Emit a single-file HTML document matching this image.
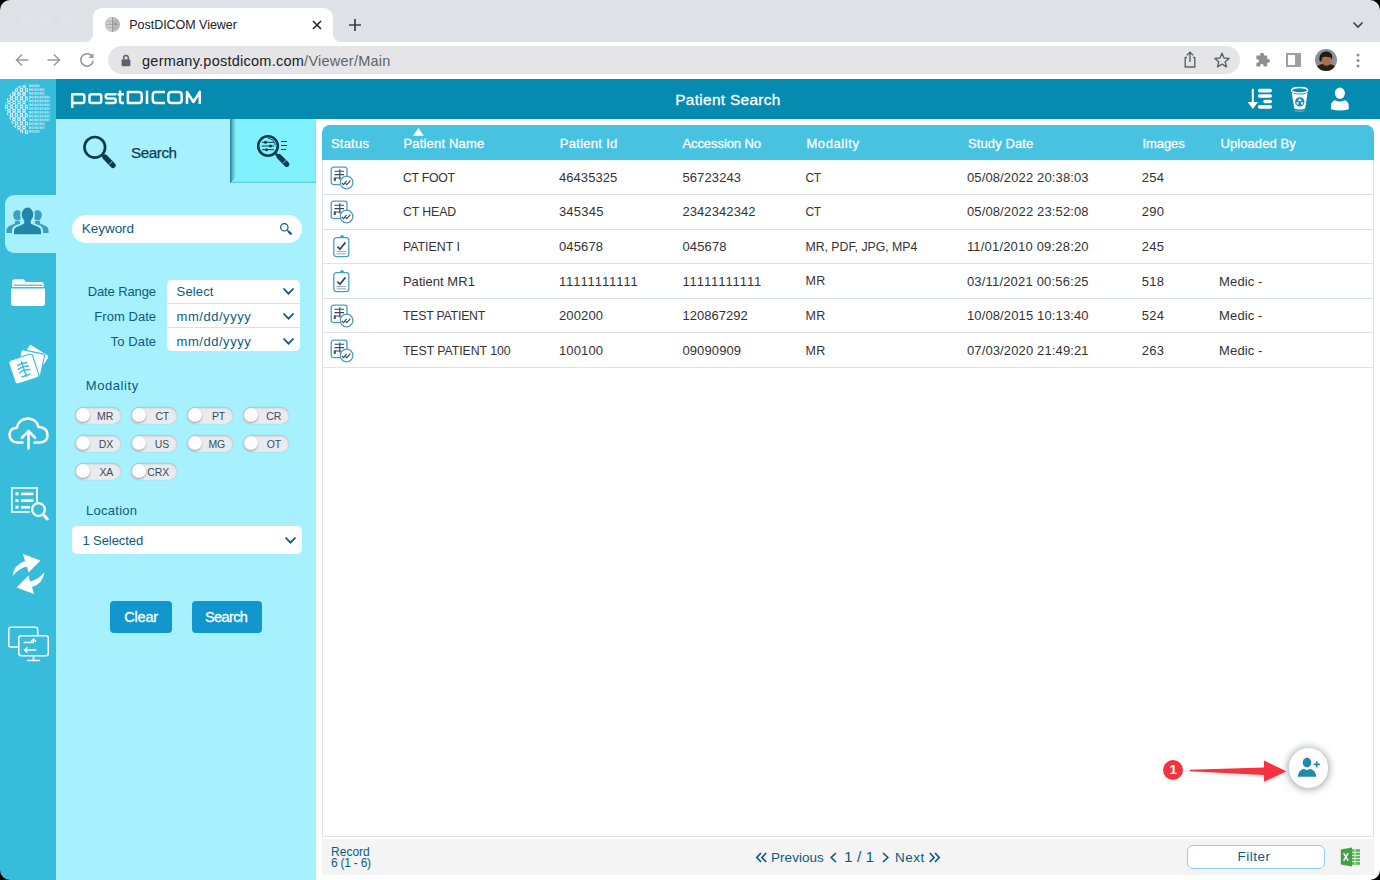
<!DOCTYPE html>
<html>
<head>
<meta charset="utf-8">
<title>PostDICOM Viewer</title>
<style>
*{box-sizing:border-box;margin:0;padding:0}
html,body{width:1380px;height:880px;overflow:hidden;background:#fff;font-family:"Liberation Sans",sans-serif;}
body{position:relative}
.abs{position:absolute}
/* ---------- browser chrome ---------- */
#tabbar{left:0;top:0;width:1380px;height:42px;background:#dee1e6}
#tab{left:93px;top:8px;width:240px;height:34px;background:#fff;border-radius:9px 9px 0 0}
#tab .ttl{left:36.3px;top:10.4px;font-size:12.5px;color:#202124;white-space:nowrap}
#toolbar{left:0;top:42px;width:1380px;height:37px;background:#fff}
#omni{left:108px;top:46px;width:1132px;height:28px;border-radius:14px;background:#e5e5e7}
#url{left:142px;top:52.8px;font-size:14.5px;color:#202124;white-space:nowrap}
#url span{color:#5f6368}
.tl{width:12px;height:12px;border-radius:50%;background:#e2e3e7;top:15px}
/* ---------- app ---------- */
#side{left:0;top:79px;width:56px;height:801px;background:#38bcdc}
#hdr{left:56px;top:79px;width:1324px;height:40px;background:#058ab0}
#panel{left:56px;top:119px;width:260px;height:761px;background:#a6f1fd}
#tab2{left:230px;top:119px;width:86px;height:64.3px;background:#7ff2fd;box-shadow:inset 0 -1.5px 1.5px -.5px rgba(0,90,110,.3)}
#tab2 i{position:absolute;left:0;top:0;width:7px;height:64px;background:linear-gradient(90deg,rgba(20,95,125,.85),rgba(40,120,150,.55) 30%,rgba(60,150,175,.18) 70%,rgba(80,180,200,0));clip-path:polygon(0 0,100% 0,100% 57px,0 100%)}
#sideact{left:5px;top:195px;width:51px;height:58px;background:#a6f1fd;border-radius:9px 0 0 9px}
.lbl,.ft,.bt,#thead span,.row span{margin-left:-.6px}
.lbl{color:#0b5c7e;font-size:13px;white-space:nowrap}
.inp{background:#fff;color:#0b5c7e;font-size:13.5px;white-space:nowrap}
.lbl.r{left:76px;width:80px;text-align:right}
.chev path{fill:none;stroke:#0b5c7e;stroke-width:1.8}
.tog{width:46.400px;height:16.400px;border-radius:8.200px;background:#e9ebef;box-shadow:inset 0 1px 2px rgba(0,0,0,.22), 0 0 0 .5px rgba(0,0,0,.06)}
.tog i{position:absolute;left:1px;top:1.1px;width:14.200px;height:14.200px;border-radius:50%;background:#fdfdfd;box-shadow:0 1px 2px rgba(0,0,0,.35)}
.tog b{position:absolute;right:7.800px;top:2.400px;font-weight:normal;font-size:10.5px;letter-spacing:-.15px;color:#3d4a5c;line-height:12px}
.bt{-webkit-text-stroke:.3px #fff;color:#fff;font-size:14.5px;white-space:nowrap;line-height:16px}
.btn{height:32px;border-radius:4px;background:#1196ce;color:#fff;font-size:14.500px;line-height:32px;text-align:center}
/* table */
#thead{left:322px;top:124.8px;width:1052.3px;height:35.6px;background:#47c2e0;border-radius:8px 8px 0 0}
#thead span{-webkit-text-stroke:.3px #fff;position:absolute;top:11px;color:#fff;font-size:13px;white-space:nowrap}
#tbody{left:322px;top:160.4px;width:1052.3px;height:677px;background:#fff;border:1px solid #dfe3e6;border-top:none}
.row{position:absolute;left:0;width:1050.3px;height:34.6px;border-bottom:1px solid #dde3e7}
.row span{position:absolute;top:9.5px;color:#333;font-size:13px;white-space:nowrap}
#foot{left:322px;top:839.3px;width:1052.3px;height:35.3px;background:#f4f4f4}
.ft{color:#0b5c7e;white-space:nowrap}
.pg path{fill:none;stroke:#0b5c7e;stroke-width:1.700}
</style>
</head>
<body>
<!-- browser chrome -->
<div id="tabbar" class="abs"></div>
<div class="abs tl" style="left:21px"></div>
<div class="abs tl" style="left:41px"></div>
<div class="abs tl" style="left:61px"></div>
<div id="tab" class="abs"><span class="abs ttl" style="letter-spacing:-0.036px">PostDICOM Viewer</span></div>
<!-- tab curved feet -->
<svg class="abs" style="left:85px;top:34px" width="8" height="8"><path d="M8 0 V8 H0 A8 8 0 0 0 8 0Z" fill="#fff"/></svg>
<svg class="abs" style="left:333px;top:34px" width="8" height="8"><path d="M0 0 V8 H8 A8 8 0 0 1 0 0Z" fill="#fff"/></svg>
<!-- favicon -->
<svg class="abs" style="left:104px;top:16px" width="17" height="17" viewBox="0 0 17 17">
 <circle cx="8.5" cy="8.5" r="7.6" fill="#b9bbbf"/>
 <path d="M8.5 .9 A7.6 7.6 0 0 0 8.5 16.1Z" fill="#cdcfd2"/>
 <path d="M8.5 1 V16" stroke="#8a8d92" stroke-width=".8"/>
 <path d="M3 5.5H14M2 8.5H15M3 11.5H14" stroke="#9b9ea3" stroke-width=".6"/>
 <rect x="10.3" y="7" width="2.2" height="2.2" fill="#e8655a"/><rect x="4.3" y="7.6" width="2.4" height="1" fill="#e8928a"/>
</svg>
<!-- tab close / new tab / chevron -->
<svg class="abs" style="left:311px;top:19px" width="12" height="12" viewBox="0 0 12 12"><path d="M2 2L10 10M10 2L2 10" stroke="#202124" stroke-width="1.5" fill="none"/></svg>
<svg class="abs" style="left:348px;top:18px" width="14" height="14" viewBox="0 0 14 14"><path d="M7 1V13M1 7H13" stroke="#3c4043" stroke-width="1.7" fill="none"/></svg>
<svg class="abs" style="left:1351px;top:20px" width="14" height="10" viewBox="0 0 14 10"><path d="M2.5 2.5L7 7L11.5 2.5" stroke="#3c4043" stroke-width="1.6" fill="none"/></svg>
<div id="toolbar" class="abs"></div>
<div id="omni" class="abs"></div>
<div id="url" class="abs" style="letter-spacing:0.249px">germany.postdicom.com<span>/Viewer/Main</span></div>
<!-- nav arrows -->
<svg class="abs" style="left:14px;top:52px" width="16" height="16" viewBox="0 0 16 16"><path d="M14.5 8H2.5M8 2.5L2.5 8L8 13.5" stroke="#9b9b9d" stroke-width="1.5" fill="none"/></svg>
<svg class="abs" style="left:46px;top:52px" width="16" height="16" viewBox="0 0 16 16"><path d="M1.5 8H13.5M8 2.5L13.5 8L8 13.5" stroke="#9b9b9d" stroke-width="1.5" fill="none"/></svg>
<svg class="abs" style="left:78px;top:51px" width="18" height="18" viewBox="0 0 18 18"><path d="M14.6 6.2A6.2 6.2 0 1 0 15.2 9.6" stroke="#8f959b" stroke-width="1.5" fill="none"/><path d="M15.4 2.2V7H10.6Z" fill="#8f959b"/></svg>
<!-- lock -->
<svg class="abs" style="left:120px;top:53px" width="12" height="15" viewBox="0 0 12 15"><rect x="1.6" y="6.2" width="8.8" height="7" rx="1.2" fill="#5f6368"/><path d="M3.7 6.2V4.7A2.3 2.3 0 0 1 8.3 4.7V6.2" stroke="#5f6368" stroke-width="1.5" fill="none"/></svg>
<!-- share -->
<svg class="abs" style="left:1181px;top:50px" width="18" height="20" viewBox="0 0 18 20"><path d="M6 7.5H4.2V17H13.8V7.5H12" stroke="#5f6368" stroke-width="1.4" fill="none" stroke-linejoin="round"/><path d="M9 12V2.5M5.8 5.3L9 2.2L12.2 5.3" stroke="#5f6368" stroke-width="1.4" fill="none"/></svg>
<!-- star -->
<svg class="abs" style="left:1213px;top:51px" width="18" height="18" viewBox="0 0 18 18"><path d="M9 2.2L11 7L16.2 7.4L12.2 10.8L13.5 15.9L9 13.1L4.5 15.9L5.8 10.8L1.8 7.4L7 7Z" stroke="#5f6368" stroke-width="1.4" fill="none" stroke-linejoin="round"/></svg>
<!-- puzzle -->
<svg class="abs" style="left:1253px;top:51px" width="18" height="18" viewBox="0 0 18 18"><path d="M7.2 3.6A1.9 1.9 0 0 1 11 3.6V4.6H14.2V8H15A1.9 1.9 0 0 1 15 11.8H14.2V15.6H10.6V14.6A1.7 1.7 0 0 0 7.2 14.6V15.6H3.4V11.9H4.2A1.8 1.8 0 0 0 4.2 8.3H3.4V4.6H7.2Z" fill="#8a8f94"/></svg>
<!-- side panel -->
<svg class="abs" style="left:1286px;top:53px" width="15" height="14" viewBox="0 0 15 14"><rect x="1" y="1" width="13" height="12" fill="none" stroke="#9aa0a6" stroke-width="2"/><rect x="9" y="1" width="5" height="12" fill="#9aa0a6"/></svg>
<!-- avatar -->
<svg class="abs" style="left:1315px;top:49px" width="22" height="22" viewBox="0 0 22 22"><defs><clipPath id="av"><circle cx="11" cy="11" r="11"/></clipPath></defs><g clip-path="url(#av)"><rect width="22" height="22" fill="#8b9096"/><ellipse cx="11" cy="20" rx="10" ry="5.5" fill="#26221f"/><ellipse cx="11.5" cy="11.5" rx="5" ry="6" fill="#a9714f"/><path d="M4.5 12C3.5 5 8 2.2 12 2.6C16.5 3 18 7 17 11L15.8 8.5C13 8 9 7 7.5 8.2L6 13Z" fill="#1e1a18"/><path d="M8 15Q11.5 18 15 15L14.5 17.5Q11.5 19.5 8.5 17.5Z" fill="#3a2a22"/></g></svg>
<!-- kebab -->
<svg class="abs" style="left:1355px;top:52px" width="6" height="18" viewBox="0 0 6 18"><circle cx="3" cy="3" r="1.5" fill="#8a8f94"/><circle cx="3" cy="8.5" r="1.5" fill="#8a8f94"/><circle cx="3" cy="14" r="1.5" fill="#8a8f94"/></svg>

<!-- app -->
<div id="side" class="abs"></div>
<div id="hdr" class="abs"></div>
<div id="panel" class="abs"></div>
<div id="tab2" class="abs"><i></i></div>
<div id="sideact" class="abs"></div>

<!-- sidebar curve near active tab -->
<svg class="abs" style="left:50px;top:189px" width="6" height="6"><path d="M6 0V6H0A6 6 0 0 0 6 0Z" fill="#38bcdc"/></svg>
<svg class="abs" style="left:50px;top:253px" width="6" height="6"><path d="M6 6V0H0A6 6 0 0 1 6 6Z" fill="#38bcdc"/></svg>

<!-- brain logo -->
<svg class="abs" style="left:4px;top:83px" width="49" height="53" viewBox="4 83 49 53">
 <defs>
  <clipPath id="brL"><path d="M28 84.6C24 84.300 19.500 85.600 16 88.200C12 91 9 95 7 99.500C5.300 103 4.600 106 5.200 109C5.800 112 7 114.500 9 117C10.500 120.500 12 124 14.500 127C17.500 130.500 21 133 24.500 134.200L28 134.400Z"/></clipPath>
 </defs>
 <g clip-path="url(#brL)" fill="none" stroke="#fff" stroke-width="1"><circle cx="4.00" cy="85.60" r="1.3"/><circle cx="9.00" cy="85.60" r="1.3"/><circle cx="14.00" cy="85.60" r="1.3"/><circle cx="19.00" cy="85.60" r="1.3"/><circle cx="24.00" cy="85.60" r="1.3"/><circle cx="6.50" cy="89.80" r="1.3"/><circle cx="11.50" cy="89.80" r="1.3"/><circle cx="16.50" cy="89.80" r="1.3"/><circle cx="21.50" cy="89.80" r="1.3"/><circle cx="26.50" cy="89.80" r="1.3"/><circle cx="4.00" cy="94.00" r="1.3"/><circle cx="9.00" cy="94.00" r="1.3"/><circle cx="14.00" cy="94.00" r="1.3"/><circle cx="19.00" cy="94.00" r="1.3"/><circle cx="24.00" cy="94.00" r="1.3"/><circle cx="6.50" cy="98.20" r="1.3"/><circle cx="11.50" cy="98.20" r="1.3"/><circle cx="16.50" cy="98.20" r="1.3"/><circle cx="21.50" cy="98.20" r="1.3"/><circle cx="26.50" cy="98.20" r="1.3"/><circle cx="4.00" cy="102.40" r="1.3"/><circle cx="9.00" cy="102.40" r="1.3"/><circle cx="14.00" cy="102.40" r="1.3"/><circle cx="19.00" cy="102.40" r="1.3"/><circle cx="24.00" cy="102.40" r="1.3"/><circle cx="6.50" cy="106.60" r="1.3"/><circle cx="11.50" cy="106.60" r="1.3"/><circle cx="16.50" cy="106.60" r="1.3"/><circle cx="21.50" cy="106.60" r="1.3"/><circle cx="26.50" cy="106.60" r="1.3"/><circle cx="4.00" cy="110.80" r="1.3"/><circle cx="9.00" cy="110.80" r="1.3"/><circle cx="14.00" cy="110.80" r="1.3"/><circle cx="19.00" cy="110.80" r="1.3"/><circle cx="24.00" cy="110.80" r="1.3"/><circle cx="6.50" cy="115.00" r="1.3"/><circle cx="11.50" cy="115.00" r="1.3"/><circle cx="16.50" cy="115.00" r="1.3"/><circle cx="21.50" cy="115.00" r="1.3"/><circle cx="26.50" cy="115.00" r="1.3"/><circle cx="4.00" cy="119.20" r="1.3"/><circle cx="9.00" cy="119.20" r="1.3"/><circle cx="14.00" cy="119.20" r="1.3"/><circle cx="19.00" cy="119.20" r="1.3"/><circle cx="24.00" cy="119.20" r="1.3"/><circle cx="6.50" cy="123.40" r="1.3"/><circle cx="11.50" cy="123.40" r="1.3"/><circle cx="16.50" cy="123.40" r="1.3"/><circle cx="21.50" cy="123.40" r="1.3"/><circle cx="26.50" cy="123.40" r="1.3"/><circle cx="4.00" cy="127.60" r="1.3"/><circle cx="9.00" cy="127.60" r="1.3"/><circle cx="14.00" cy="127.60" r="1.3"/><circle cx="19.00" cy="127.60" r="1.3"/><circle cx="24.00" cy="127.60" r="1.3"/><circle cx="6.50" cy="131.80" r="1.3"/><circle cx="11.50" cy="131.80" r="1.3"/><circle cx="16.50" cy="131.80" r="1.3"/><circle cx="21.50" cy="131.80" r="1.3"/><circle cx="26.50" cy="131.80" r="1.3"/><path d="M4.95 86.55L5.55 88.85M3.05 86.55L2.45 88.85M9.95 86.55L10.55 88.85M8.05 86.55L7.45 88.85M14.95 86.55L15.55 88.85M13.05 86.55L12.45 88.85M19.95 86.55L20.55 88.85M18.05 86.55L17.45 88.85M24.95 86.55L25.55 88.85M23.05 86.55L22.45 88.85M7.45 90.75L8.05 93.05M5.55 90.75L4.95 93.05M12.45 90.75L13.05 93.05M10.55 90.75L9.95 93.05M17.45 90.75L18.05 93.05M15.55 90.75L14.95 93.05M22.45 90.75L23.05 93.05M20.55 90.75L19.95 93.05M27.45 90.75L28.05 93.05M25.55 90.75L24.95 93.05M4.95 94.95L5.55 97.25M3.05 94.95L2.45 97.25M9.95 94.95L10.55 97.25M8.05 94.95L7.45 97.25M14.95 94.95L15.55 97.25M13.05 94.95L12.45 97.25M19.95 94.95L20.55 97.25M18.05 94.95L17.45 97.25M24.95 94.95L25.55 97.25M23.05 94.95L22.45 97.25M7.45 99.15L8.05 101.45M5.55 99.15L4.95 101.45M12.45 99.15L13.05 101.45M10.55 99.15L9.95 101.45M17.45 99.15L18.05 101.45M15.55 99.15L14.95 101.45M22.45 99.15L23.05 101.45M20.55 99.15L19.95 101.45M27.45 99.15L28.05 101.45M25.55 99.15L24.95 101.45M4.95 103.35L5.55 105.65M3.05 103.35L2.45 105.65M9.95 103.35L10.55 105.65M8.05 103.35L7.45 105.65M14.95 103.35L15.55 105.65M13.05 103.35L12.45 105.65M19.95 103.35L20.55 105.65M18.05 103.35L17.45 105.65M24.95 103.35L25.55 105.65M23.05 103.35L22.45 105.65M7.45 107.55L8.05 109.85M5.55 107.55L4.95 109.85M12.45 107.55L13.05 109.85M10.55 107.55L9.95 109.85M17.45 107.55L18.05 109.85M15.55 107.55L14.95 109.85M22.45 107.55L23.05 109.85M20.55 107.55L19.95 109.85M27.45 107.55L28.05 109.85M25.55 107.55L24.95 109.85M4.95 111.75L5.55 114.05M3.05 111.75L2.45 114.05M9.95 111.75L10.55 114.05M8.05 111.75L7.45 114.05M14.95 111.75L15.55 114.05M13.05 111.75L12.45 114.05M19.95 111.75L20.55 114.05M18.05 111.75L17.45 114.05M24.95 111.75L25.55 114.05M23.05 111.75L22.45 114.05M7.45 115.95L8.05 118.25M5.55 115.95L4.95 118.25M12.45 115.95L13.05 118.25M10.55 115.95L9.95 118.25M17.45 115.95L18.05 118.25M15.55 115.95L14.95 118.25M22.45 115.95L23.05 118.25M20.55 115.95L19.95 118.25M27.45 115.95L28.05 118.25M25.55 115.95L24.95 118.25M4.95 120.15L5.55 122.45M3.05 120.15L2.45 122.45M9.95 120.15L10.55 122.45M8.05 120.15L7.45 122.45M14.95 120.15L15.55 122.45M13.05 120.15L12.45 122.45M19.95 120.15L20.55 122.45M18.05 120.15L17.45 122.45M24.95 120.15L25.55 122.45M23.05 120.15L22.45 122.45M7.45 124.35L8.05 126.65M5.55 124.35L4.95 126.65M12.45 124.35L13.05 126.65M10.55 124.35L9.95 126.65M17.45 124.35L18.05 126.65M15.55 124.35L14.95 126.65M22.45 124.35L23.05 126.65M20.55 124.35L19.95 126.65M27.45 124.35L28.05 126.65M25.55 124.35L24.95 126.65M4.95 128.55L5.55 130.85M3.05 128.55L2.45 130.85M9.95 128.55L10.55 130.85M8.05 128.55L7.45 130.85M14.95 128.55L15.55 130.85M13.05 128.55L12.45 130.85M19.95 128.55L20.55 130.85M18.05 128.55L17.45 130.85M24.95 128.55L25.55 130.85M23.05 128.55L22.45 130.85M7.45 132.75L8.05 135.05M5.55 132.75L4.95 135.05M12.45 132.75L13.05 135.05M10.55 132.75L9.95 135.05M17.45 132.75L18.05 135.05M15.55 132.75L14.95 135.05M22.45 132.75L23.05 135.05M20.55 132.75L19.95 135.05M27.45 132.75L28.05 135.05M25.55 132.75L24.95 135.05" stroke-width=".7"/></g>
 <g fill="none" stroke="#fff" stroke-width=".55" opacity=".92"><path d="M29.50 84.50V87.10"/><path d="M30.50 84.50V87.10M34.10 84.50V87.10"/><ellipse cx="32.30" cy="85.80" rx=".8" ry="1.05"/><path d="M35.50 84.50V87.10M39.10 84.50V87.10"/><ellipse cx="37.30" cy="85.80" rx=".8" ry="1.05"/><path d="M29.50 88.30V90.90"/><path d="M30.50 88.30V90.90M34.10 88.30V90.90"/><ellipse cx="32.30" cy="89.60" rx=".8" ry="1.05"/><path d="M35.50 88.30V90.90M39.10 88.30V90.90"/><ellipse cx="37.30" cy="89.60" rx=".8" ry="1.05"/><path d="M40.50 88.30V90.90M44.10 88.30V90.90"/><ellipse cx="42.30" cy="89.60" rx=".8" ry="1.05"/><path d="M29.50 92.10V94.70"/><path d="M30.50 92.10V94.70M34.10 92.10V94.70"/><ellipse cx="32.30" cy="93.40" rx=".8" ry="1.05"/><path d="M35.50 92.10V94.70M39.10 92.10V94.70"/><ellipse cx="37.30" cy="93.40" rx=".8" ry="1.05"/><path d="M40.50 92.10V94.70M44.10 92.10V94.70"/><ellipse cx="42.30" cy="93.40" rx=".8" ry="1.05"/><path d="M29.50 95.90V98.50"/><path d="M30.50 95.90V98.50M34.10 95.90V98.50"/><ellipse cx="32.30" cy="97.20" rx=".8" ry="1.05"/><path d="M35.50 95.90V98.50M39.10 95.90V98.50"/><ellipse cx="37.30" cy="97.20" rx=".8" ry="1.05"/><path d="M40.50 95.90V98.50M44.10 95.90V98.50"/><ellipse cx="42.30" cy="97.20" rx=".8" ry="1.05"/><path d="M45.50 95.90V98.50M49.10 95.90V98.50"/><ellipse cx="47.30" cy="97.20" rx=".8" ry="1.05"/><path d="M29.50 99.70V102.30"/><path d="M30.50 99.70V102.30M34.10 99.70V102.30"/><ellipse cx="32.30" cy="101.00" rx=".8" ry="1.05"/><path d="M35.50 99.70V102.30M39.10 99.70V102.30"/><ellipse cx="37.30" cy="101.00" rx=".8" ry="1.05"/><path d="M40.50 99.70V102.30M44.10 99.70V102.30"/><ellipse cx="42.30" cy="101.00" rx=".8" ry="1.05"/><path d="M45.50 99.70V102.30M49.10 99.70V102.30"/><ellipse cx="47.30" cy="101.00" rx=".8" ry="1.05"/><path d="M29.50 103.50V106.10"/><path d="M30.50 103.50V106.10M34.10 103.50V106.10"/><ellipse cx="32.30" cy="104.80" rx=".8" ry="1.05"/><path d="M35.50 103.50V106.10M39.10 103.50V106.10"/><ellipse cx="37.30" cy="104.80" rx=".8" ry="1.05"/><path d="M40.50 103.50V106.10M44.10 103.50V106.10"/><ellipse cx="42.30" cy="104.80" rx=".8" ry="1.05"/><path d="M45.50 103.50V106.10M49.10 103.50V106.10"/><ellipse cx="47.30" cy="104.80" rx=".8" ry="1.05"/><path d="M29.50 107.30V109.90"/><path d="M30.50 107.30V109.90M34.10 107.30V109.90"/><ellipse cx="32.30" cy="108.60" rx=".8" ry="1.05"/><path d="M35.50 107.30V109.90M39.10 107.30V109.90"/><ellipse cx="37.30" cy="108.60" rx=".8" ry="1.05"/><path d="M40.50 107.30V109.90M44.10 107.30V109.90"/><ellipse cx="42.30" cy="108.60" rx=".8" ry="1.05"/><path d="M45.50 107.30V109.90M49.10 107.30V109.90"/><ellipse cx="47.30" cy="108.60" rx=".8" ry="1.05"/><path d="M29.50 111.10V113.70"/><path d="M30.50 111.10V113.70M34.10 111.10V113.70"/><ellipse cx="32.30" cy="112.40" rx=".8" ry="1.05"/><path d="M35.50 111.10V113.70M39.10 111.10V113.70"/><ellipse cx="37.30" cy="112.40" rx=".8" ry="1.05"/><path d="M40.50 111.10V113.70M44.10 111.10V113.70"/><ellipse cx="42.30" cy="112.40" rx=".8" ry="1.05"/><path d="M45.50 111.10V113.70M49.10 111.10V113.70"/><ellipse cx="47.30" cy="112.40" rx=".8" ry="1.05"/><path d="M29.50 114.90V117.50"/><path d="M30.50 114.90V117.50M34.10 114.90V117.50"/><ellipse cx="32.30" cy="116.20" rx=".8" ry="1.05"/><path d="M35.50 114.90V117.50M39.10 114.90V117.50"/><ellipse cx="37.30" cy="116.20" rx=".8" ry="1.05"/><path d="M40.50 114.90V117.50M44.10 114.90V117.50"/><ellipse cx="42.30" cy="116.20" rx=".8" ry="1.05"/><path d="M45.50 114.90V117.50M49.10 114.90V117.50"/><ellipse cx="47.30" cy="116.20" rx=".8" ry="1.05"/><path d="M29.50 118.70V121.30"/><path d="M30.50 118.70V121.30M34.10 118.70V121.30"/><ellipse cx="32.30" cy="120.00" rx=".8" ry="1.05"/><path d="M35.50 118.70V121.30M39.10 118.70V121.30"/><ellipse cx="37.30" cy="120.00" rx=".8" ry="1.05"/><path d="M40.50 118.70V121.30M44.10 118.70V121.30"/><ellipse cx="42.30" cy="120.00" rx=".8" ry="1.05"/><path d="M45.50 118.70V121.30M49.10 118.70V121.30"/><ellipse cx="47.30" cy="120.00" rx=".8" ry="1.05"/><path d="M29.50 122.50V125.10"/><path d="M30.50 122.50V125.10M34.10 122.50V125.10"/><ellipse cx="32.30" cy="123.80" rx=".8" ry="1.05"/><path d="M35.50 122.50V125.10M39.10 122.50V125.10"/><ellipse cx="37.30" cy="123.80" rx=".8" ry="1.05"/><path d="M40.50 122.50V125.10M44.10 122.50V125.10"/><ellipse cx="42.30" cy="123.80" rx=".8" ry="1.05"/><path d="M29.50 126.30V128.90"/><path d="M30.50 126.30V128.90M34.10 126.30V128.90"/><ellipse cx="32.30" cy="127.60" rx=".8" ry="1.05"/><path d="M35.50 126.30V128.90M39.10 126.30V128.90"/><ellipse cx="37.30" cy="127.60" rx=".8" ry="1.05"/><path d="M40.50 126.30V128.90M44.10 126.30V128.90"/><ellipse cx="42.30" cy="127.60" rx=".8" ry="1.05"/><path d="M29.50 130.10V132.70"/><path d="M30.50 130.10V132.70M34.10 130.10V132.70"/><ellipse cx="32.30" cy="131.40" rx=".8" ry="1.05"/><path d="M35.50 130.10V132.70M39.10 130.10V132.70"/><ellipse cx="37.30" cy="131.40" rx=".8" ry="1.05"/></g>
</svg>

<!-- postDICOM wordmark -->
<svg class="abs" style="left:68px;top:88px" width="136" height="22" viewBox="68 88 136 22">
 <g fill="none" stroke="#fff" stroke-width="2.5" stroke-linejoin="round" stroke-linecap="butt">
  <path d="M72.2 108V94.2H82.3Q84.3 94.2 84.3 96.2V100.9Q84.3 102.9 82.3 102.9H72.2"/>
  <path d="M91.5 94.2H99.2Q101.2 94.2 101.2 96.2V100.9Q101.2 102.9 99.2 102.9H91.5Q89.5 102.9 89.5 100.9V96.2Q89.5 94.2 91.5 94.2Z"/>
  <path d="M116.5 94.2H107.6Q105.7 94.2 105.7 96.2V96.6Q105.7 98.5 107.6 98.5H113.8Q115.7 98.5 115.7 100.5V100.9Q115.7 102.9 113.8 102.9H105"/>
  <path d="M120 90.6V100.9Q120 102.9 122 102.9H124M117.6 94.2H124"/>
  <path d="M127.9 91.9H138.7Q141.7 91.9 141.7 94.9V99.9Q141.7 102.9 138.7 102.9H127.9Z"/>
  <path d="M147 90.7V104"/>
  <path d="M165 91.9H155.8Q152.8 91.9 152.8 94.9V99.9Q152.8 102.9 155.8 102.9H165"/>
  <path d="M171.4 91.9H178.7Q181.7 91.9 181.7 94.9V99.9Q181.7 102.9 178.7 102.9H171.4Q168.4 102.9 168.4 99.9V94.9Q168.4 91.9 171.4 91.9Z"/>
  <path d="M187 104V91.9L193.4 102L199.8 91.9V104"/>
 </g>
</svg>
<div class="abs" style="left:675.2px;top:91.1px;font-size:15.4px;color:#fff;white-space:nowrap;-webkit-text-stroke:.3px #fff;letter-spacing:0.325px" id="ptitle">Patient Search</div>

<!-- header right icons -->
<svg class="abs" style="left:1245px;top:86px" width="30" height="26" viewBox="1245 86 30 26">
 <path d="M1252.800 88.800V104" stroke="#fff" stroke-width="2"/><path d="M1247.500 102.100H1258L1252.800 108.900Z" fill="#fff"/>
 <g stroke="#fff" stroke-width="3.600" stroke-linecap="round"><path d="M1259.600 90.600H1270.200M1259.600 96.050H1270.200M1265 101.500H1270.200M1259.600 106.900H1270.200"/></g>
</svg>
<svg class="abs" style="left:1288px;top:85px" width="24" height="28" viewBox="1288 85 24 28">
 <ellipse cx="1299.600" cy="90.200" rx="8.100" ry="2.700" fill="none" stroke="#fff" stroke-width="1.300"/>
 <path d="M1291.700 92.400L1294.100 108Q1294.300 109.400 1299.700 109.400Q1305.100 109.400 1305.300 108L1307.600 92.400Q1304.600 94.600 1299.600 94.600Q1294.700 94.600 1291.700 92.400Z" fill="#fff"/>
 <circle cx="1299.800" cy="101.900" r="4.700" fill="#1b8fb6"/>
 <g fill="#fff"><path d="M1299.800 98.300L1301.900 101.200H1297.700Z"/><path d="M1296.300 102.200L1299 102.600L1297.300 105.400Z"/><path d="M1303.300 102.200L1302.300 105.400L1300.600 102.600Z"/></g>
 <circle cx="1299.800" cy="102.100" r="1.100" fill="#1b8fb6"/>
 <path d="M1294.600 110.700Q1299.700 111.800 1304.800 110.700" stroke="#fff" stroke-width=".6" fill="none" opacity=".7"/>
</svg>
<svg class="abs" style="left:1329px;top:85px" width="22" height="28" viewBox="1329 85 22 28">
 <ellipse cx="1339.900" cy="93.300" rx="5" ry="5.700" fill="#fff"/>
 <path d="M1331 109.200V105.500Q1331 101.600 1335.300 100.200Q1339.900 102.800 1344.500 100.200Q1348.700 101.600 1348.700 105.500V109.200Q1339.900 111.600 1331 109.200Z" fill="#fff"/>
</svg>

<!-- sidebar icons -->
<!-- people (active) -->
<svg class="abs" style="left:5.800px;top:207.300px" width="43" height="28" viewBox="0 0 43 28">
 <g fill="#3d9fc0">
  <ellipse cx="11.5" cy="8.3" rx="4.3" ry="5.3"/><path d="M0.5 26V22.5Q1 19.5 5 18.2L9 16.5V14H14V16.5L18 18.5V26Z"/>
  <ellipse cx="31.5" cy="8.3" rx="4.3" ry="5.3"/><path d="M42.5 26V22.5Q42 19.5 38 18.2L34 16.5V14H29V16.5L25 18.5V26Z"/>
 </g>
 <g fill="#a6f1fd"><ellipse cx="21.5" cy="8" rx="7.4" ry="8.6"/><path d="M6 27.5V23Q6.5 19 12 17.6L17 15.5V13H26V15.5L31 17.6Q36.500 19 37 23V27.5Z"/></g>
 <g fill="#2087aa">
  <ellipse cx="21.500" cy="7.6" rx="5.8" ry="7"/>
  <path d="M8 27.200V23.500Q8.500 20.300 13 19L18.200 16.800V13H24.800V16.800L30 19Q34.500 20.300 35 23.500V27.200Z"/>
 </g>
</svg>
<!-- folder -->
<svg class="abs" style="left:10px;top:278px" width="36" height="29" viewBox="0 0 36 29">
 <path d="M2.200 9V3.600Q2.200 1.200 4.600 1.200H12.500Q14 1.200 14.800 2.600L15.600 4H31.400Q33.800 4 33.800 6.400V9Z" fill="#fff"/>
 <path d="M1 10.400H35V25.600Q35 28 32.600 28H3.400Q1 28 1 25.600Z" fill="#fff"/>
 <path d="M3.500 7.200H32.500" stroke="#38bcdc" stroke-width="1.2"/>
</svg>
<!-- xray cards -->
<svg class="abs" style="left:7px;top:342px" width="42" height="44" viewBox="-1.8 -2.4 45.5 47.6">
 <g transform="rotate(32 27 16)"><rect x="15" y="4" width="25" height="24" rx="2.500" fill="#fff" stroke="#38bcdc" stroke-width="1.200"/></g>
 <g transform="rotate(12 24 20)"><rect x="11" y="8" width="26" height="25" rx="2.500" fill="#fff" stroke="#38bcdc" stroke-width="1.200"/></g>
 <g transform="rotate(-18 16 27)"><rect x="3" y="13.500" width="27" height="27" rx="3" fill="#fff" stroke="#38bcdc" stroke-width="1.200"/>
  <g stroke="#38bcdc" stroke-width="1.500" fill="none" stroke-linecap="round"><path d="M16.500 18.500V35.500"/><path d="M11.500 21.500Q16.500 19.500 21.500 21.500M10.500 25.500Q16.500 23.500 22.500 25.500M10.500 29.500Q16.500 27.500 22.500 29.500M12 34Q13 35.800 16.500 33.500Q20 35.800 21 34"/></g>
 </g>
</svg>
<!-- cloud upload -->
<svg class="abs" style="left:7px;top:415.500px" width="43" height="34" viewBox="0 0 43 34">
 <path d="M15.500 26.500H10.500Q2.500 26 2.500 18.500Q3 12 9.800 11.800Q11.500 3 21 2.500Q29.500 3 31.500 11Q40.500 11.500 40.500 19Q40.500 26 33 26.500H27.500" fill="none" stroke="#fff" stroke-width="2.500" stroke-linecap="round" stroke-linejoin="round"/>
 <path d="M21.500 32.500V15.500M14.800 21.800L21.500 15L28.200 21.800" fill="none" stroke="#fff" stroke-width="2.500" stroke-linecap="round" stroke-linejoin="round"/>
</svg>
<!-- list search -->
<svg class="abs" style="left:9px;top:485px" width="40" height="37" viewBox="0 0 40 37">
 <path d="M21 27H2.800V2.800H28V17" fill="none" stroke="#fff" stroke-width="1.700"/>
 <g fill="#fff"><rect x="6.500" y="7.300" width="3" height="3"/><rect x="6.500" y="14" width="3" height="3"/><rect x="6.500" y="20.700" width="3" height="3"/>
 <rect x="12" y="7.600" width="12.500" height="2.600"/><rect x="12" y="14.300" width="12.500" height="2.600"/><rect x="12" y="21" width="9" height="2.600"/></g>
 <circle cx="29.500" cy="24.500" r="6.400" fill="#38bcdc" stroke="#fff" stroke-width="2.400"/>
 <path d="M34.300 29.500L38.300 34" stroke="#fff" stroke-width="3" stroke-linecap="round"/>
</svg>
<!-- sync arrows -->
<svg class="abs" style="left:11px;top:552px" width="35" height="44" viewBox="0 0 35 44">
 <path d="M1.500 24Q3 12.500 14 9L12 2L29.500 8.500L17.500 20.500L16 14.500Q8 16 1.500 24Z" fill="#fff"/>
 <path d="M33.500 20Q32 31.500 21 35L23 42L5.500 35.500L17.500 23.500L19 29.500Q27 28 33.500 20Z" fill="#fff"/>
</svg>
<!-- monitors -->
<svg class="abs" style="left:7px;top:625px" width="43" height="37" viewBox="0 0 43 37">
 <g fill="none" stroke="#fff" stroke-width="1.500" stroke-linejoin="round" stroke-linecap="round">
  <path d="M11.500 22H4Q1.800 22 1.800 19.800V4.400Q1.800 2.200 4 2.200H28.500Q30.700 2.200 30.700 4.400V10.500"/>
  <rect x="11.800" y="10.800" width="29.500" height="20" rx="2.200"/>
  <path d="M26.500 31V35.500M20.500 35.500H32.500"/>
  <path d="M17 17.500H26.500V15M24.300 16.200L26.500 14L28.700 16.200" stroke-width="1.300"/>
  <path d="M29 25H17.500M20 22.800L17.500 25L20 27.200" stroke-width="1.300"/>
 </g>
</svg>

<!-- ============ left panel ============ -->
<!-- search tab -->
<svg class="abs" style="left:80px;top:133px" width="38" height="38" viewBox="80 133 38 38">
 <circle cx="94.800" cy="147.300" r="10.300" fill="none" stroke="#0c3a52" stroke-width="2.700"/>
 <path d="M102.300 155L105 157.600" stroke="#0c3a52" stroke-width="2.400"/>
 <path d="M105 157.200L113 165.400" stroke="#0c3a52" stroke-width="5.400" stroke-linecap="round"/>
 <path d="M109.200 164.300L112.200 161.400" stroke="#a6f1fd" stroke-width=".8"/>
</svg>
<div class="abs" id="stab" style="left:131px;top:143.8px;font-size:15.2px;color:#0d3d56;white-space:nowrap;-webkit-text-stroke:.25px #0d3d56;letter-spacing:-0.425px">Search</div>
<!-- filter-search icon -->
<svg class="abs" style="left:254px;top:132px" width="40" height="38" viewBox="254 132 40 38">
 <circle cx="268" cy="146" r="9.800" fill="none" stroke="#0c3a52" stroke-width="2.600"/>
 <path d="M268 138.500A7.300 7.300 0 0 1 275.300 145" stroke="#0c3a52" stroke-width=".9" fill="none"/>
 <g stroke="#0c3a52" stroke-width="1"><path d="M262 142.300H274M261.500 146H274.500M262 149.700H274"/><path d="M281 141.500H287M281 145.500H287M281 149.500H286"/></g>
 <g fill="#0c3a52"><circle cx="265.500" cy="142.300" r="1.500"/><circle cx="270.500" cy="146" r="1.500"/><circle cx="266.500" cy="149.700" r="1.500"/></g>
 <path d="M275.500 153.500L278.500 156.500" stroke="#0c3a52" stroke-width="2.400"/>
 <path d="M279 156.500L286.800 164.300" stroke="#0c3a52" stroke-width="5.200" stroke-linecap="round"/>
 <path d="M283 163.300L286 160.400" stroke="#7ff2fd" stroke-width=".8"/>
</svg>

<!-- keyword -->
<div class="abs inp" style="left:72px;top:215px;width:230px;height:28px;border-radius:14px"></div>
<div class="abs lbl" id="kw" style="left:82.4px;top:221px;font-size:13.5px;letter-spacing:-0.039px">Keyword</div>
<svg class="abs" style="left:278px;top:221px" width="16" height="16" viewBox="0 0 16 16"><circle cx="6.300" cy="6.300" r="3.700" fill="none" stroke="#0b5c7e" stroke-width="1.200"/><path d="M9.300 9.300L10.300 10.300" stroke="#0b5c7e" stroke-width="1.200"/><path d="M10.800 10.800L12.800 12.800" stroke="#0b5c7e" stroke-width="2.300" stroke-linecap="round"/></svg>

<!-- date fields -->
<div class="abs inp" style="left:167px;top:279.800px;width:133.200px;height:71.600px;border-radius:5px"></div>
<div class="abs" style="left:167px;top:303.300px;width:133.200px;height:1px;background:#c4e7fb"></div>
<div class="abs" style="left:167px;top:327.300px;width:133.200px;height:1px;background:#c4e7fb"></div>
<div class="abs lbl" style="left:88.3px;top:284px;letter-spacing:-0.110px">Date Range</div>
<div class="abs lbl" style="left:94.9px;top:309px;letter-spacing:0.049px">From Date</div>
<div class="abs lbl" style="left:111.2px;top:333.500px;letter-spacing:0.115px">To Date</div>
<div class="abs lbl" style="left:177.2px;top:284px;letter-spacing:0.132px">Select</div>
<div class="abs lbl" style="left:177.2px;top:309px;letter-spacing:0.528px">mm/dd/yyyy</div>
<div class="abs lbl" style="left:177.2px;top:333.500px;letter-spacing:0.528px">mm/dd/yyyy</div>
<svg class="abs chev" style="left:281.500px;top:287px" width="13" height="9" viewBox="0 0 13 9"><path d="M1.500 1.500L6.500 6.700L11.500 1.500"/></svg>
<svg class="abs chev" style="left:281.500px;top:312px" width="13" height="9" viewBox="0 0 13 9"><path d="M1.500 1.500L6.500 6.700L11.500 1.500"/></svg>
<svg class="abs chev" style="left:281.500px;top:336.500px" width="13" height="9" viewBox="0 0 13 9"><path d="M1.500 1.500L6.500 6.700L11.500 1.500"/></svg>

<div class="abs lbl" style="left:86.400px;top:378px;letter-spacing:0.568px">Modality</div>
<div class="abs tog" style="left:74.5px;top:407.2px"><i></i><b>MR</b></div>
<div class="abs tog" style="left:130.5px;top:407.2px"><i></i><b>CT</b></div>
<div class="abs tog" style="left:186.5px;top:407.2px"><i></i><b>PT</b></div>
<div class="abs tog" style="left:242.5px;top:407.2px"><i></i><b>CR</b></div>
<div class="abs tog" style="left:74.5px;top:435.2px"><i></i><b>DX</b></div>
<div class="abs tog" style="left:130.5px;top:435.2px"><i></i><b>US</b></div>
<div class="abs tog" style="left:186.5px;top:435.2px"><i></i><b>MG</b></div>
<div class="abs tog" style="left:242.5px;top:435.2px"><i></i><b>OT</b></div>
<div class="abs tog" style="left:74.5px;top:463.2px"><i></i><b>XA</b></div>
<div class="abs tog" style="left:130.5px;top:463.2px"><i></i><b>CRX</b></div>

<div class="abs lbl" style="left:86.500px;top:503px;letter-spacing:0.292px">Location</div>
<div class="abs inp" style="left:72px;top:526px;width:230px;height:28px;border-radius:5px"></div>
<div class="abs lbl" style="left:83px;top:532.500px;letter-spacing:-0.071px">1 Selected</div>
<svg class="abs chev" style="left:283.500px;top:535.500px" width="13" height="9" viewBox="0 0 13 9"><path d="M1.500 1.500L6.500 6.700L11.500 1.500"/></svg>

<div class="abs btn" style="left:110px;top:601px;width:62px"></div><div class="abs bt" style="left:124.8px;top:609px;letter-spacing:-0.189px">Clear</div>
<div class="abs btn" style="left:191.700px;top:601px;width:70.500px"></div><div class="abs bt" style="left:205.5px;top:609px;letter-spacing:-0.591px">Search</div>

<div id="thead" class="abs"><span style="left:9.5px;letter-spacing:0.228px">Status</span><span style="left:82px;letter-spacing:0.194px">Patient Name</span><span style="left:238.4px;letter-spacing:0.285px">Patient Id</span><span style="left:361px;letter-spacing:-0.071px">Accession No</span><span style="left:485px;letter-spacing:0.583px">Modality</span><span style="left:646.7px;letter-spacing:0.086px">Study Date</span><span style="left:821px;letter-spacing:-0.048px">Images</span><span style="left:899px;letter-spacing:0.095px">Uploaded By</span>
<svg class="abs" style="left:90.500px;top:2.900px" width="11" height="8"><path d="M5.400 0L10.800 7.800H0Z" fill="#fff"/></svg></div>
<div id="tbody" class="abs">
<div class="row" style="top:0.0px"><svg class="abs" style="left:5.800px;top:4.400px" width="26" height="26" viewBox="0 0 26 26">
 <rect x="2.200" y="2.200" width="15.800" height="17.400" rx="2.400" fill="#fff" stroke="#4a9fc4" stroke-width="1.300"/>
 <g stroke="#34495e" stroke-width="1.100" fill="none"><path d="M5.500 6.300H15M5.500 9.600H15M6 13H12M10.800 4.200V14.500"/></g>
 <rect x="4.800" y="12.500" width="2" height="3.400" fill="#34495e"/>
 <circle cx="17.600" cy="17.500" r="6.300" fill="#fff" stroke="#4a9fc4" stroke-width="1.300"/>
 <path d="M12.800 17.800L14.600 19.600L17.600 15.800M16.600 18.400L17.800 19.600L21.400 15.600" stroke="#34495e" stroke-width="1.100" fill="none"/>
</svg><span style="left:80.5px;font-size:12.3px;top:10.4px;letter-spacing:-0.258px">CT FOOT</span><span style="left:236.5px;letter-spacing:0.079px">46435325</span><span style="left:360px;letter-spacing:0.122px">56723243</span><span style="left:483px;font-size:12px;top:10.5px;letter-spacing:-0.400px">CT</span><span style="left:644.5px;letter-spacing:0.134px">05/08/2022 20:38:03</span><span style="left:819.3px;letter-spacing:0.248px">254</span></div>
<div class="row" style="top:34.6px"><svg class="abs" style="left:5.800px;top:4.400px" width="26" height="26" viewBox="0 0 26 26">
 <rect x="2.200" y="2.200" width="15.800" height="17.400" rx="2.400" fill="#fff" stroke="#4a9fc4" stroke-width="1.300"/>
 <g stroke="#34495e" stroke-width="1.100" fill="none"><path d="M5.500 6.300H15M5.500 9.600H15M6 13H12M10.800 4.200V14.500"/></g>
 <rect x="4.800" y="12.500" width="2" height="3.400" fill="#34495e"/>
 <circle cx="17.600" cy="17.500" r="6.300" fill="#fff" stroke="#4a9fc4" stroke-width="1.300"/>
 <path d="M12.800 17.800L14.600 19.600L17.600 15.800M16.600 18.400L17.800 19.600L21.400 15.600" stroke="#34495e" stroke-width="1.100" fill="none"/>
</svg><span style="left:80.5px;font-size:12.3px;top:10.4px;letter-spacing:-0.078px">CT HEAD</span><span style="left:236.5px;letter-spacing:0.222px">345345</span><span style="left:360px;letter-spacing:0.087px">2342342342</span><span style="left:483px;font-size:12px;top:10.5px;letter-spacing:-0.400px">CT</span><span style="left:644.5px;letter-spacing:0.134px">05/08/2022 23:52:08</span><span style="left:819.3px;letter-spacing:0.248px">290</span></div>
<div class="row" style="top:69.2px"><svg class="abs" style="left:8.200px;top:4.600px" width="22" height="26" viewBox="0 0 22 26">
 <path d="M8.800 3.400L10.200 1.400H11.800L13.200 3.400" fill="#4a9fc4" stroke="#4a9fc4" stroke-width=".8"/>
 <rect x="2.800" y="3.600" width="15" height="19" rx="2.600" fill="#fff" stroke="#4a9fc4" stroke-width="1.300"/>
 <path d="M6.400 12.600L9 15.200L14.400 8.400" stroke="#34495e" stroke-width="1.700" fill="none"/>
 <path d="M5.600 17.600H15M5.600 19.800H15" stroke="#8d99a6" stroke-width=".9"/>
</svg><span style="left:80.5px;font-size:12.3px;top:10.4px;letter-spacing:0.035px">PATIENT I</span><span style="left:236.5px;letter-spacing:0.142px">045678</span><span style="left:360px;letter-spacing:0.142px">045678</span><span style="left:483px;font-size:12.3px;top:10.4px;letter-spacing:-0.004px">MR, PDF, JPG, MP4</span><span style="left:644.5px;letter-spacing:0.187px">11/01/2010 09:28:20</span><span style="left:819.3px;letter-spacing:0.248px">245</span></div>
<div class="row" style="top:103.8px"><svg class="abs" style="left:8.200px;top:4.600px" width="22" height="26" viewBox="0 0 22 26">
 <path d="M8.800 3.400L10.200 1.400H11.800L13.200 3.400" fill="#4a9fc4" stroke="#4a9fc4" stroke-width=".8"/>
 <rect x="2.800" y="3.600" width="15" height="19" rx="2.600" fill="#fff" stroke="#4a9fc4" stroke-width="1.300"/>
 <path d="M6.400 12.600L9 15.200L14.400 8.400" stroke="#34495e" stroke-width="1.700" fill="none"/>
 <path d="M5.600 17.600H15M5.600 19.800H15" stroke="#8d99a6" stroke-width=".9"/>
</svg><span style="left:80.5px;letter-spacing:0.045px">Patient MR1</span><span style="left:236.5px;letter-spacing:0.901px">11111111111</span><span style="left:360px;letter-spacing:0.901px">11111111111</span><span style="left:483px;font-size:12.5px;top:10.2px;letter-spacing:0.547px">MR</span><span style="left:644.5px;letter-spacing:0.187px">03/11/2021 00:56:25</span><span style="left:819.3px;letter-spacing:0.248px">518</span><span style="left:896.7px;letter-spacing:0.112px">Medic -</span></div>
<div class="row" style="top:138.4px"><svg class="abs" style="left:5.800px;top:4.400px" width="26" height="26" viewBox="0 0 26 26">
 <rect x="2.200" y="2.200" width="15.800" height="17.400" rx="2.400" fill="#fff" stroke="#4a9fc4" stroke-width="1.300"/>
 <g stroke="#34495e" stroke-width="1.100" fill="none"><path d="M5.500 6.300H15M5.500 9.600H15M6 13H12M10.800 4.200V14.500"/></g>
 <rect x="4.800" y="12.500" width="2" height="3.400" fill="#34495e"/>
 <circle cx="17.600" cy="17.500" r="6.300" fill="#fff" stroke="#4a9fc4" stroke-width="1.300"/>
 <path d="M12.800 17.800L14.600 19.600L17.600 15.800M16.600 18.400L17.800 19.600L21.400 15.600" stroke="#34495e" stroke-width="1.100" fill="none"/>
</svg><span style="left:80.5px;font-size:12.3px;top:10.4px;letter-spacing:-0.212px">TEST PATIENT</span><span style="left:236.5px;letter-spacing:0.142px">200200</span><span style="left:360px;letter-spacing:0.040px">120867292</span><span style="left:483px;font-size:12.5px;top:10.2px;letter-spacing:0.547px">MR</span><span style="left:644.5px;letter-spacing:0.134px">10/08/2015 10:13:40</span><span style="left:819.3px;letter-spacing:0.248px">524</span><span style="left:896.7px;letter-spacing:0.112px">Medic -</span></div>
<div class="row" style="top:173.0px"><svg class="abs" style="left:5.800px;top:4.400px" width="26" height="26" viewBox="0 0 26 26">
 <rect x="2.200" y="2.200" width="15.800" height="17.400" rx="2.400" fill="#fff" stroke="#4a9fc4" stroke-width="1.300"/>
 <g stroke="#34495e" stroke-width="1.100" fill="none"><path d="M5.500 6.300H15M5.500 9.600H15M6 13H12M10.800 4.200V14.500"/></g>
 <rect x="4.800" y="12.500" width="2" height="3.400" fill="#34495e"/>
 <circle cx="17.600" cy="17.500" r="6.300" fill="#fff" stroke="#4a9fc4" stroke-width="1.300"/>
 <path d="M12.800 17.800L14.600 19.600L17.600 15.800M16.600 18.400L17.800 19.600L21.400 15.600" stroke="#34495e" stroke-width="1.100" fill="none"/>
</svg><span style="left:80.5px;font-size:12.3px;top:10.4px;letter-spacing:-0.049px">TEST PATIENT 100</span><span style="left:236.5px;letter-spacing:0.142px">100100</span><span style="left:360px;letter-spacing:0.122px">09090909</span><span style="left:483px;font-size:12.5px;top:10.2px;letter-spacing:0.547px">MR</span><span style="left:644.5px;letter-spacing:0.134px">07/03/2020 21:49:21</span><span style="left:819.3px;letter-spacing:0.248px">263</span><span style="left:896.7px;letter-spacing:0.112px">Medic -</span></div>
</div>
<div id="foot" class="abs">
 <div class="abs ft" style="left:9.700px;top:6.6px;font-size:12px;line-height:12px;letter-spacing:-0.017px">Record</div><div class="abs ft" style="left:9.700px;top:18px;font-size:12px;line-height:12px;letter-spacing:-0.252px">6 (1 - 6)</div>
 <svg class="abs pg" style="left:433px;top:12.500px" width="13" height="11" viewBox="0 0 13 11"><path d="M6 1L1.800 5.500L6 10M11.200 1L7 5.500L11.200 10"/></svg>
 <div class="abs ft" id="prev" style="left:449.700px;top:10.500px;font-size:13.500px;letter-spacing:0.010px">Previous</div>
 <svg class="abs pg" style="left:507px;top:12.500px" width="9" height="11" viewBox="0 0 9 11"><path d="M7 1L2.200 5.500L7 10"/></svg>
 <div class="abs ft" id="pgn" style="left:522.500px;top:8.500px;font-size:15.500px;letter-spacing:0.032px">1 / 1</div>
 <svg class="abs pg" style="left:558.500px;top:12.500px" width="9" height="11" viewBox="0 0 9 11"><path d="M2 1L6.800 5.500L2 10"/></svg>
 <div class="abs ft" id="next" style="left:573.700px;top:10.500px;font-size:13.500px;letter-spacing:0.478px">Next</div>
 <svg class="abs pg" style="left:606px;top:12.500px" width="13" height="11" viewBox="0 0 13 11"><path d="M1.800 1L6 5.500L1.800 10M7 1L11.200 5.500L7 10"/></svg>
 <div class="abs" style="left:865px;top:6px;width:138px;height:24px;border:1px solid #8ad1f5;border-radius:6px;background:#fff;color:#0b5c7e;font-size:13.500px;line-height:22px;text-align:center"></div><div class="abs ft" style="left:916.2px;top:9.9px;font-size:13.5px;letter-spacing:0.500px">Filter</div>
 <svg class="abs" style="left:1017.500px;top:8px" width="21" height="20" viewBox="0 0 21 20">
  <rect x="10" y="2.200" width="10" height="15.600" fill="#5cb85c"/>
  <g stroke="#e9f6e9" stroke-width=".9"><path d="M10 5.300H20M10 8.400H20M10 11.500H20M10 14.600H20M15 2.200V17.800"/></g>
  <path d="M.8 2.500L12 .5V19.500L.8 17.500Z" fill="#43a047"/>
  <path d="M3.600 6.200L8.200 13.800M8.200 6.200L3.600 13.800" stroke="#fff" stroke-width="1.400"/>
 </svg>
</div>

<!-- annotation -->
<div class="abs" style="left:1163px;top:760px;width:20.400px;height:20.400px;border-radius:50%;background:#f5323f;color:#fff;font-weight:bold;font-size:13.500px;line-height:20.400px;text-align:center">1</div>
<svg class="abs" style="left:1185px;top:756px" width="106" height="30" viewBox="1185 756 106 30">
 <defs><filter id="ash" x="-10%" y="-30%" width="120%" height="180%"><feGaussianBlur stdDeviation="1.200"/></filter></defs>
 <path d="M1190 771.500L1264 768.300V761L1286.500 771.300L1264 782V775Z" fill="#000" opacity=".13" filter="url(#ash)" transform="translate(0 2)"/>
 <path d="M1189.800 769.700L1264 767.500V760.600L1286.400 771.200L1264 781.800V775L1189.800 771.300Z" fill="#f5323f"/>
</svg>
<div class="abs" style="left:1288.500px;top:748px;width:39.600px;height:39.600px;border-radius:50%;background:#fff;box-shadow:0 .5px 7px 2px rgba(70,80,85,.42)"></div>
<svg class="abs" style="left:1296px;top:755px" width="26" height="24" viewBox="1296 755 26 24">
 <ellipse cx="1307" cy="762.600" rx="4.300" ry="4.900" fill="#2289a9"/>
 <path d="M1297.800 776.700Q1298.500 770.500 1303.500 768.800Q1307 771 1310.500 768.800Q1315.500 770.500 1316.400 776.700Z" fill="#2289a9"/>
 <path d="M1316.700 761.200V767.600M1313.500 764.400H1319.900" stroke="#2289a9" stroke-width="1.700"/>
</svg>

<!-- window rounded corners -->
<svg class="abs" style="left:0;top:0" width="10" height="10"><path d="M0 0H10A10 10 0 0 0 0 10Z" fill="#000"/></svg>
<svg class="abs" style="left:1370px;top:0" width="10" height="10"><path d="M10 0H0A10 10 0 0 1 10 10Z" fill="#000"/></svg>
<svg class="abs" style="left:0;top:870px" width="10" height="10"><path d="M0 10H10A10 10 0 0 1 0 0Z" fill="#000"/></svg>
<svg class="abs" style="left:1370px;top:870px" width="10" height="10"><path d="M10 10H0A10 10 0 0 0 10 0Z" fill="#000"/></svg>
</body>
</html>
